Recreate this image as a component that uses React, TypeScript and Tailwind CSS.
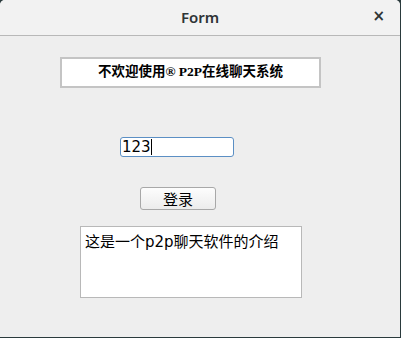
import React from "react";

export default function App() {
  return (
    <div className="w-[401px] h-[338px] bg-[#2a3a3c] overflow-hidden">
      <div className="w-[400px] h-[337px] bg-[#eeeeee] rounded-t-[5px] overflow-hidden flex flex-col">
        <div className="h-[36px] shrink-0 bg-[#f2f2f2] border-b border-[#b8b8b8] flex items-center relative">
          <span className="flex-1 text-center text-[15px] text-[#2e3436] font-semibold font-['Noto_Sans',sans-serif] leading-none">
            Form
          </span>
          <span className="absolute right-[15px] top-[9px] text-[#2e3436] font-['DejaVu_Sans',sans-serif] font-bold text-[15px] leading-none">
            ×
          </span>
        </div>
        <div className="flex flex-col items-start">
          <div className="ml-[60px] mt-[21px] w-[261px] h-[31px] bg-white border-2 border-[#c4c4c4] flex items-center justify-center text-[13.5px] font-bold text-black font-['Liberation_Serif','Noto_Sans_CJK_SC',serif]">
            不欢迎使用® P2P在线聊天系统
          </div>
          <div className="ml-[120px] mt-[49px] w-[114px] h-[20px] bg-white border border-[#5b8fc4] rounded-[3px] flex items-center pl-[1px] text-[15px] text-black font-['DejaVu_Sans','Noto_Sans_CJK_SC',sans-serif] leading-none">
            123<span className="inline-block w-px h-[16px] bg-black"></span>
          </div>
          <button className="ml-[140px] mt-[30px] w-[76px] h-[23px] border border-[#a8a8a8] rounded-[3px] bg-gradient-to-b from-[#fdfdfd] to-[#ececec] flex items-center justify-center text-[15px] text-black font-['Noto_Sans_CJK_SC',sans-serif] leading-none">
            登录
          </button>
          <div className="ml-[80px] mt-[16px] w-[222px] h-[72px] bg-white border border-[#b8b8b8] px-[4px] pt-[5px] text-[15px] text-black font-['DejaVu_Sans','Noto_Sans_CJK_SC',sans-serif] leading-[20px]">
            这是一个p2p聊天软件的介绍
          </div>
        </div>
      </div>
    </div>
  );
}
